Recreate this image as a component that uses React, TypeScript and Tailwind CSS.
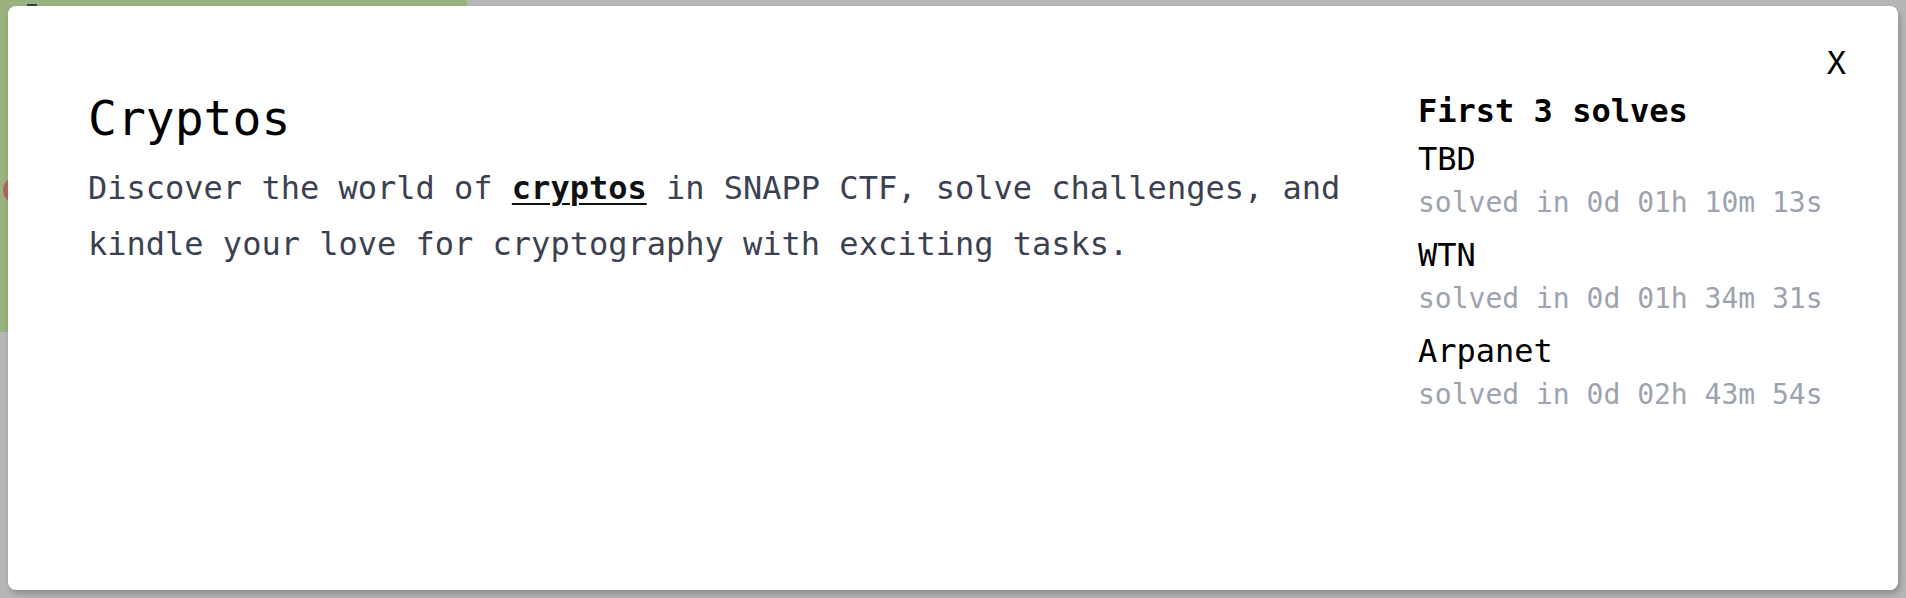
import React from 'react';

const solves = [
  { team: 'TBD', time: 'solved in 0d 01h 10m 13s' },
  { team: 'WTN', time: 'solved in 0d 01h 34m 31s' },
  { team: 'Arpanet', time: 'solved in 0d 02h 43m 54s' },
];

const mono = "font-['DejaVu_Sans_Mono','Liberation_Mono',monospace]";

export default function App() {
  return (
    <div className={`relative h-[598px] w-full overflow-hidden bg-[#b6b6b6] ${mono}`}>
      {/* page content behind the overlay */}
      <div className="flex h-[332px] w-[467px] flex-col bg-[#9ab27f]">
        <div className="ml-[27px] mt-[4px] h-[3px] w-[10px] bg-[#3a4434]" />
        <div className="ml-[3px] mt-[170px] h-[26px] w-[26px] rounded-full bg-[#b5645a]" />
      </div>

      {/* modal */}
      <div className="absolute left-[8px] right-[8px] top-[6px] bottom-[8px] rounded-lg bg-white shadow-[2px_4px_6px_rgba(0,0,0,0.22)]">
        <button className="absolute right-[52px] top-[33px] text-[32px] leading-[48px] text-black">
          X
        </button>

        <div className="flex gap-[30px] pl-[80px] pt-[81px]">
          <div className="w-[1300px]">
            <h1 className="text-[48px] leading-[62px] font-normal text-black">Cryptos</h1>
            <p className="mt-[11px] text-[32px] leading-[56px] text-[#3b4150]">
              Discover the world of{' '}
              <a className="font-bold text-[#111] underline decoration-2 underline-offset-4">cryptos</a>{' '}
              in SNAPP CTF, solve challenges, and kindle your love for cryptography with exciting tasks.
            </p>
          </div>

          <div className="flex flex-col">
            <h2 className="text-[32px] leading-[48px] font-bold text-black">First 3 solves</h2>
            {solves.map((s) => (
              <div key={s.team} className="mb-2">
                <div className="text-[32px] leading-[48px] text-black">{s.team}</div>
                <div className="text-[28px] leading-[40px] text-[#9ca3af]">{s.time}</div>
              </div>
            ))}
          </div>
        </div>
      </div>
    </div>
  );
}
